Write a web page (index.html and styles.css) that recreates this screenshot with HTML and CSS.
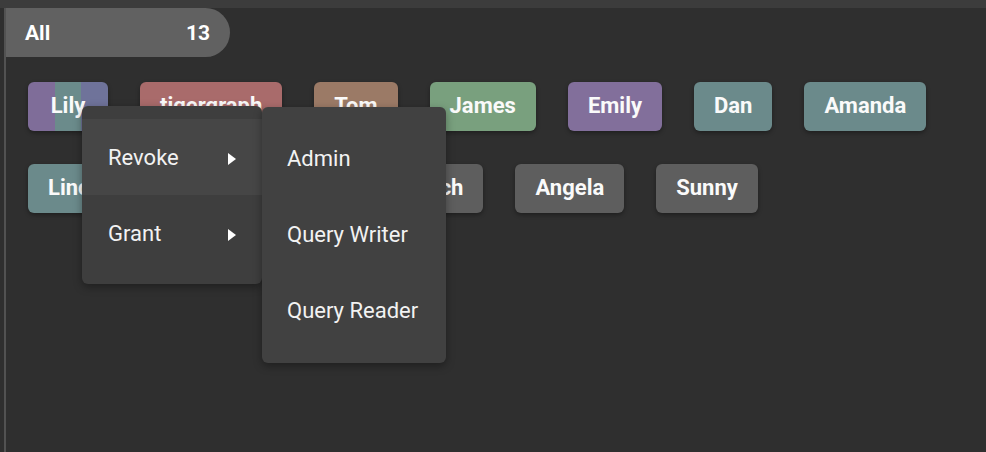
FILE: index.html
```html
<!DOCTYPE html>
<html>
<head>
<meta charset="utf-8">
<link rel="stylesheet" href="styles.css">
</head>
<body>
<div class="topbar"></div>
<div class="panel">
  <div class="pill"><span>All</span><span>13</span></div>
  <div class="chips">
    <div class="chip lily"><span class="s s1"></span><span class="s s2"></span><span class="s s3"></span><span class="t">Lily</span></div>
    <div class="chip red">tigergraph</div>
    <div class="chip brown">Tom</div>
    <div class="chip green">James</div>
    <div class="chip purple">Emily</div>
    <div class="chip teal">Dan</div>
    <div class="chip teal">Amanda</div>
    <div class="chip teal">Linda</div>
    <div class="chip gray">Karen</div>
    <div class="chip gray">Alex</div>
    <div class="chip gray">Rich</div>
    <div class="chip gray">Angela</div>
    <div class="chip gray">Sunny</div>
  </div>
  <div class="menu">
    <div class="item active"><span>Revoke</span><span class="arrow"></span></div>
    <div class="item"><span>Grant</span><span class="arrow"></span></div>
  </div>
  <div class="menu sub">
    <div class="item"><span>Admin</span></div>
    <div class="item"><span>Query Writer</span></div>
    <div class="item"><span>Query Reader</span></div>
  </div>
</div>
</body>
</html>
```
FILE: styles.css
```css
html, body {
  margin: 0;
  padding: 0;
  background: #2f2f2f;
  font-family: Roboto, "Liberation Sans", sans-serif;
  color: #fff;
  height: 452px;
  overflow: hidden;
}
.topbar {
  height: 8px;
  background: #3c3c3c;
}
.panel {
  margin-left: 4px;
  border-left: 2px solid #525252;
  height: 444px;
  position: relative;
}
.pill {
  width: 224px;
  height: 49px;
  box-sizing: border-box;
  background: #616161;
  border-radius: 0 25px 25px 0;
  display: flex;
  align-items: center;
  justify-content: space-between;
  padding: 0 20px 0 19px;
  font-weight: 700;
  font-size: 21px;
}
.chips {
  display: flex;
  flex-wrap: wrap;
  gap: 33px 32px;
  padding: 25px 40px 0 22px;
}
.chip {
  height: 49px;
  box-sizing: border-box;
  padding: 0 20px 3px;
  border-radius: 6px;
  display: flex;
  align-items: center;
  font-weight: 700;
  font-size: 22px;
  box-shadow: 0 2px 4px rgba(0,0,0,0.35);
  position: relative;
  overflow: hidden;
  color: #fafafa;
}
.red { background: #a96b6b; }
.brown { background: #9b7a66; }
.green { background: #79a07e; }
.purple { background: #826f9b; }
.teal { background: #6b8a8b; }
.gray { background: #5e5e5e; }
.lily {
  display: grid;
  grid-template-columns: 1fr 1fr 1fr;
  padding: 0;
  width: 80px;
}
.lily .s { grid-row: 1; height: 100%; }
.lily .s1 { grid-column: 1; background: #7f6d99; }
.lily .s2 { grid-column: 2; background: #6b8b8b; }
.lily .s3 { grid-column: 3; background: #6f739a; }
.lily .t { grid-row: 1; grid-column: 1 / 4; justify-self: center; position: relative; margin-bottom: 3px; }
.menu {
  position: absolute;
  left: 76px;
  top: 98px;
  width: 180px;
  box-sizing: border-box;
  padding: 13px 0;
  background: #3e3e3e;
  border-radius: 6px;
  box-shadow: 0 3px 8px rgba(0,0,0,0.35);
  font-size: 22px;
  color: #f2f2f2;
}
.menu.sub {
  left: 256px;
  top: 99px;
  width: 184px;
  padding: 13px 0 15px;
  background: #414141;
}
.item {
  height: 76px;
  display: flex;
  align-items: center;
  justify-content: space-between;
  padding: 0 26px 0 26px;
}
.sub .item { padding-left: 25px; }
.item.active { background: #464646; }
.arrow {
  width: 0;
  height: 0;
  border-top: 6px solid transparent;
  border-bottom: 6px solid transparent;
  border-left: 8px solid #fff;
  margin-top: 3px;
}
```
